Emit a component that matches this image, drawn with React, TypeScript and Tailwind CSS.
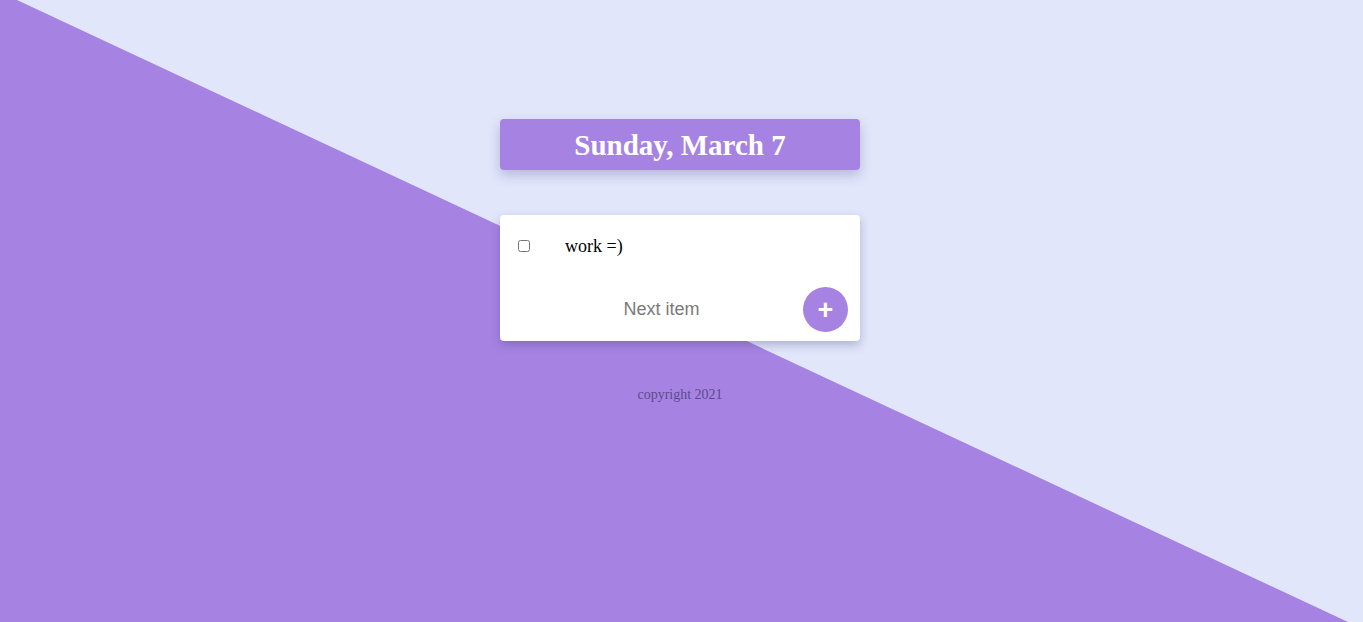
export default function App() {
  return (
    <div className="relative min-h-[622px] w-full overflow-hidden bg-[#e1e6fb] font-['Liberation_Serif',serif]">
      {/* diagonal background */}
      <div className="absolute inset-0 bg-[#a683e3] [clip-path:polygon(0_0,17px_0,1348px_100%,0_100%)]" />

      <div className="relative ml-[calc(50%-181.5px)] flex w-[360px] flex-col pt-[119px]">
        <div className="flex h-[51px] items-center justify-center rounded bg-[#a683e3] shadow-[0_5px_12px_rgba(80,80,140,0.3)]">
          <h1 className="pt-[2px] text-[29px] font-bold leading-none text-white">Sunday, March 7</h1>
        </div>

        <div className="mt-[45px] flex h-[126px] flex-col rounded bg-white shadow-[0_4px_10px_rgba(60,60,110,0.3)]">
          <div className="flex items-center pl-[18px] pt-[22px]">
            <input type="checkbox" className="m-0 h-[12px] w-[12px]" />
            <span className="ml-[35px] text-[18px] leading-[18px] text-black">work =)</span>
          </div>
          <div className="mt-auto flex items-center pb-[9px] pl-[20px] pr-[12px]">
            <input
              type="text"
              placeholder="Next item"
              className="min-w-0 flex-1 bg-transparent text-center font-['Liberation_Sans',sans-serif] text-[18px] text-black outline-none placeholder:text-[#7a7a7a]"
            />
            <button className="flex h-[45px] w-[45px] items-center justify-center rounded-full bg-[#a683e3] pt-[1px] font-['Liberation_Sans',sans-serif] text-[27px] font-bold leading-none text-white">
              +
            </button>
          </div>
        </div>

        <p className="mt-[43px] text-center text-[14px] text-[#5a4a8c]">copyright 2021</p>
      </div>
    </div>
  );
}
